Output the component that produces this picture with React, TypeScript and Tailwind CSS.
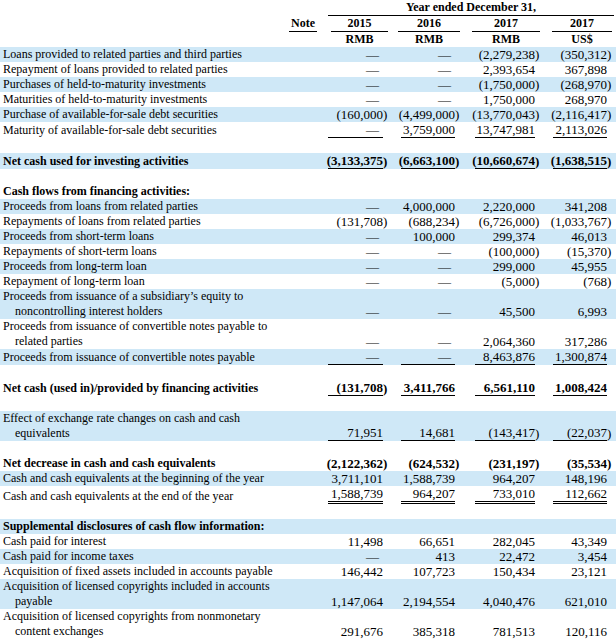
import React from "react";

type Row = {
  label?: string[];
  vals?: string[];
  blue?: boolean;
  bold?: boolean;
  line?: "single" | "double";
  blank?: boolean;
};

const rows: Row[] = [
  { label: ["Loans provided to related parties and third parties"], vals: ["—", "—", "(2,279,238)", "(350,312)"], blue: true },
  { label: ["Repayment of loans provided to related parties"], vals: ["—", "—", "2,393,654", "367,898"] },
  { label: ["Purchases of held-to-maturity investments"], vals: ["—", "—", "(1,750,000)", "(268,970)"], blue: true },
  { label: ["Maturities of held-to-maturity investments"], vals: ["—", "—", "1,750,000", "268,970"] },
  { label: ["Purchase of available-for-sale debt securities"], vals: ["(160,000)", "(4,499,000)", "(13,770,043)", "(2,116,417)"], blue: true },
  { label: ["Maturity of available-for-sale debt securities"], vals: ["—", "3,759,000", "13,747,981", "2,113,026"], line: "single" },
  { blank: true },
  { label: ["Net cash used for investing activities"], vals: ["(3,133,375)", "(6,663,100)", "(10,660,674)", "(1,638,515)"], blue: true, bold: true, line: "single" },
  { blank: true },
  { label: ["Cash flows from financing activities:"], bold: true },
  { label: ["Proceeds from loans from related parties"], vals: ["—", "4,000,000", "2,220,000", "341,208"], blue: true },
  { label: ["Repayments of loans from related parties"], vals: ["(131,708)", "(688,234)", "(6,726,000)", "(1,033,767)"] },
  { label: ["Proceeds from short-term loans"], vals: ["—", "100,000", "299,374", "46,013"], blue: true },
  { label: ["Repayments of short-term loans"], vals: ["—", "—", "(100,000)", "(15,370)"] },
  { label: ["Proceeds from long-term loan"], vals: ["—", "—", "299,000", "45,955"], blue: true },
  { label: ["Repayment of long-term loan"], vals: ["—", "—", "(5,000)", "(768)"] },
  { label: ["Proceeds from issuance of a subsidiary’s equity to", "noncontrolling interest holders"], vals: ["—", "—", "45,500", "6,993"], blue: true },
  { label: ["Proceeds from issuance of convertible notes payable to", "related parties"], vals: ["—", "—", "2,064,360", "317,286"] },
  { label: ["Proceeds from issuance of convertible notes payable"], vals: ["—", "—", "8,463,876", "1,300,874"], blue: true, line: "single" },
  { blank: true },
  { label: ["Net cash (used in)/provided by financing activities"], vals: ["(131,708)", "3,411,766", "6,561,110", "1,008,424"], bold: true, line: "single" },
  { blank: true },
  { label: ["Effect of exchange rate changes on cash and cash", "equivalents"], vals: ["71,951", "14,681", "(143,417)", "(22,037)"], blue: true, line: "single" },
  { blank: true },
  { label: ["Net decrease in cash and cash equivalents"], vals: ["(2,122,362)", "(624,532)", "(231,197)", "(35,534)"], bold: true },
  { label: ["Cash and cash equivalents at the beginning of the year"], vals: ["3,711,101", "1,588,739", "964,207", "148,196"], blue: true },
  { label: ["Cash and cash equivalents at the end of the year"], vals: ["1,588,739", "964,207", "733,010", "112,662"], line: "double" },
  { blank: true },
  { label: ["Supplemental disclosures of cash flow information:"], bold: true, blue: true },
  { label: ["Cash paid for interest"], vals: ["11,498", "66,651", "282,045", "43,349"] },
  { label: ["Cash paid for income taxes"], vals: ["—", "413", "22,472", "3,454"], blue: true },
  { label: ["Acquisition of fixed assets included in accounts payable"], vals: ["146,442", "107,723", "150,434", "23,121"] },
  { label: ["Acquisition of licensed copyrights included in accounts", "payable"], vals: ["1,147,064", "2,194,554", "4,040,476", "621,010"], blue: true },
  { label: ["Acquisition of licensed copyrights from nonmonetary", "content exchanges"], vals: ["291,676", "385,318", "781,513", "120,116"] },
];

// wrapper / underline box widths per value column
const cols = [
  { wrap: "w-[64px]", box: "w-[55px]", head: "w-[57px]" },
  { wrap: "w-[72px]", box: "w-[54px]", head: "w-[62px]" },
  { wrap: "w-[80px]", box: "w-[60px]", head: "w-[68px]" },
  { wrap: "w-[72px]", box: "w-[54px]", head: "w-[60px]" },
];

function Value({ v, i, line }: { v: string; i: number; line?: "single" | "double" }) {
  const neg = v.startsWith("(");
  const text = neg ? v.slice(0, -1) : v;
  const border =
    line === "single" ? "border-b border-black" : line === "double" ? "border-b-[3px] border-double border-black" : "";
  return (
    <div className={`${cols[i].wrap} flex justify-end items-end text-[13px]`}>
      <div className={`${cols[i].box} flex justify-end whitespace-nowrap ${border}`}>
        {v === "—" ? <span className="pr-[4px]">—</span> : <span>{text}</span>}
      </div>
      <div className="w-[5px] text-left">{neg ? ")" : ""}</div>
    </div>
  );
}

export default function App() {
  return (
    <div className="w-[616px] bg-white text-black text-[12px] leading-[15px] font-['Liberation_Serif',serif]">
      {/* header */}
      <div className="flex">
        <div className="w-[328px]" />
        <div className="w-[286px] text-center font-bold border-b border-black">Year ended December 31,</div>
      </div>
      <div className="flex font-bold">
        <div className="w-[286px]" />
        <div className="w-[38px]">
          <div className="ml-[3px] w-[28px] text-center border-b border-black">Note</div>
        </div>
        {["2015", "2016", "2017", "2017"].map((y, i) => (
          <div key={i} className={`${cols[i].wrap} flex justify-end`}>
            <div className={`${cols[i].head} text-center border-b border-black`}>{y}</div>
          </div>
        ))}
      </div>
      <div className="flex font-bold">
        <div className="w-[324px]" />
        {["RMB", "RMB", "RMB", "US$"].map((y, i) => (
          <div key={i} className={`${cols[i].wrap} flex justify-end`}>
            <div className={`${cols[i].head} text-center`}>{y}</div>
          </div>
        ))}
      </div>

      {/* body */}
      {rows.map((r, idx) =>
        r.blank ? (
          <div key={idx} className="h-[15px]" />
        ) : (
          <div key={idx} className={`flex items-end ${r.blue ? "bg-[#cfe8f7]" : ""} ${r.bold ? "font-bold" : ""}`}>
            <div className="w-[286px] pl-[3px]">
              {r.label!.map((l, j) => (
                <div key={j} className={`whitespace-nowrap ${j > 0 ? "pl-[12px]" : ""}`}>
                  {l}
                </div>
              ))}
            </div>
            <div className="w-[38px]" />
            {r.vals?.map((v, i) => (
              <Value key={i} v={v} i={i} line={r.line} />
            ))}
          </div>
        )
      )}
    </div>
  );
}
